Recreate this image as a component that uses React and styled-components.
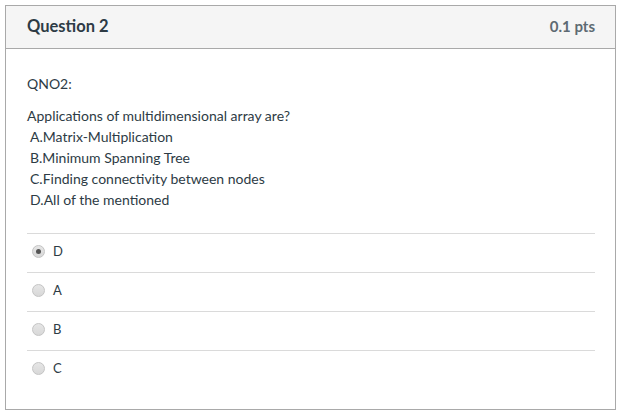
import styled, { createGlobalStyle } from 'styled-components'

const GlobalStyle = createGlobalStyle`
  body {
    margin: 0;
    background: #fff;
    font-family: Lato, 'Open Sans', sans-serif;
    color: #2d3b45;
  }
`

const answers = [
  { id: 'd', label: 'D', checked: true },
  { id: 'a', label: 'A' },
  { id: 'b', label: 'B' },
  { id: 'c', label: 'C' },
]

const App = () => {
  return (
    <>
      <GlobalStyle />
      <Panel>
        <Header>
          <Title>Question 2</Title>
          <Points>0.1 pts</Points>
        </Header>
        <Body>
          <Text>QNO2:</Text>
          <Text>
            Applications of multidimensional array are?
            <Option>A.Matrix-Multiplication</Option>
            <Option>B.Minimum Spanning Tree</Option>
            <Option>C.Finding connectivity between nodes</Option>
            <Option>D.All of the mentioned</Option>
          </Text>
        </Body>
        <Answers>
          {answers.map((answer) => (
            <Answer key={answer.id}>
              <Radio checked={answer.checked} />
              <AnswerLabel>{answer.label}</AnswerLabel>
            </Answer>
          ))}
        </Answers>
      </Panel>
    </>
  )
}

const Panel = styled.div`
  margin: 5px 0 0 5px;
  width: 609px;
  height: 403px;
  border: 1px solid #a9a9a9;
  background: #fff;
`

const Header = styled.div`
  display: flex;
  align-items: center;
  justify-content: space-between;
  height: 42px;
  padding: 0 20px 0 21px;
  background: #f5f5f5;
  border-bottom: 1px solid #a9a9a9;
`

const Title = styled.h2`
  margin: 0 0 2px;
  font-size: 16.5px;
  font-weight: 700;
  color: #2d3b45;
`

const Points = styled.span`
  margin-bottom: 2px;
  font-size: 15px;
  font-weight: 700;
  color: #5d6a72;
`

const Body = styled.div`
  padding: 24px 21px 0;
`

const Text = styled.div`
  font-size: 14px;
  line-height: 21px;
  margin-bottom: 11px;
`

const Option = styled.div`
  padding-left: 3px;
`

const Answers = styled.div`
  margin: 23px 20px 0 21px;
`

const Answer = styled.div`
  display: flex;
  align-items: center;
  gap: 8px;
  height: 34px;
  padding: 0 0 4px 5px;
  border-top: 1px solid #dadada;
`

const Radio = styled.span`
  position: relative;
  width: 13px;
  height: 13px;
  border-radius: 50%;
  border: 1px solid #c4c4c4;
  background: linear-gradient(#e6e6e6, #d8d8d8);
  box-sizing: border-box;

  &::after {
    content: '';
    display: ${(p) => (p.checked ? 'block' : 'none')};
    position: absolute;
    top: 3px;
    left: 3px;
    width: 5px;
    height: 5px;
    border-radius: 50%;
    background: #555;
  }
`

const AnswerLabel = styled.span`
  font-size: 13px;
  color: #2d3b45;
`

export default App
